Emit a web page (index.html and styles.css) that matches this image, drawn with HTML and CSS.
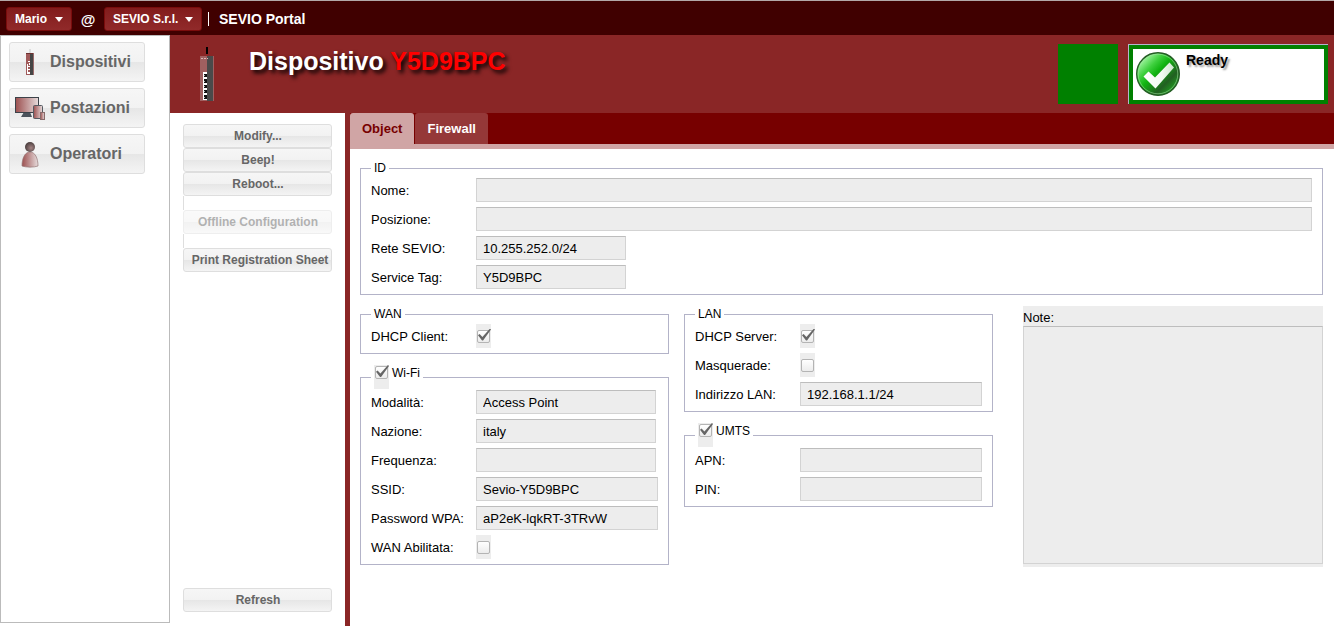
FILE: index.html
```html
<!DOCTYPE html>
<html lang="it">
<head>
<meta charset="utf-8">
<title>SEVIO Portal</title>
<link rel="stylesheet" href="styles.css">
</head>
<body>
<header class="topbar">
  <button class="menu-btn menu-user" type="button" aria-haspopup="true">Mario<span class="caret"></span></button>
  <span class="at">@</span>
  <button class="menu-btn" type="button" aria-haspopup="true">SEVIO S.r.l.<span class="caret"></span></button>
  <span class="divider"></span>
  <span class="brand">SEVIO Portal</span>
</header>
<div class="shell">
  <nav class="sidebar">
    <button class="btn nav-btn" type="button">
      <svg class="nav-icon" viewBox="0 0 32 32" aria-hidden="true">
        <defs><linearGradient id="rose" x1="0" y1="0" x2="1" y2="0"><stop offset="0" stop-color="#9c4f4f"/><stop offset="1" stop-color="#e6dcdc"/></linearGradient></defs>
        <path d="M15 2h2v4h-2z" fill="#ddd"/>
        <path d="M12 6h4v22h-4z" fill="#a05a5a"/>
        <path d="M16 6h3v22h-3z" fill="#454545"/>
        <path d="M19 6h1v22h-1z" fill="#9a6a6a"/>
        <path d="M12 6h7v1h-7z" fill="#6b3030"/>
        <path d="M14 14h2v1h-2zM13 17h1v10h-1zM15 16h1v2h-1zM14 19h2v1h-2zM14 22h2v1h-2zM14 25h2v1h-2zM13 26h3v1h-3z" fill="#fff"/>
      </svg>
      <span>Dispositivi</span>
    </button>
    <button class="btn nav-btn" type="button">
      <svg class="nav-icon" viewBox="0 0 32 32" aria-hidden="true">
        <path d="M10 19h6l2 5H7z" fill="#4b525b"/>
        <rect x="1.500" y="4.500" width="23" height="15" fill="url(#rose)" stroke="#3c4249"/>
        <rect x="19.500" y="12.500" width="9" height="13" rx="1" fill="url(#rose)" stroke="#555b62"/>
        <rect x="26.500" y="19.500" width="4" height="7" fill="url(#rose)" stroke="#886a6a"/>
      </svg>
      <span>Postazioni</span>
    </button>
    <button class="btn nav-btn" type="button">
      <svg class="nav-icon" viewBox="0 0 32 32" aria-hidden="true">
        <defs><radialGradient id="head" cx=".6" cy=".6" r=".6"><stop offset="0" stop-color="#a58484"/><stop offset="1" stop-color="#4c4040"/></radialGradient></defs>
        <path d="M8 27c0-8 3-14 8-14s8 6 8 14c-4 1.500-12 1.500-16 0z" fill="url(#rose)" stroke="#957575" stroke-width=".7"/>
        <circle cx="16" cy="8" r="5" fill="url(#head)"/>
      </svg>
      <span>Operatori</span>
    </button>
  </nav>
  <main class="main">
    <div class="title-bar">
      <svg class="device" viewBox="0 0 14 56" aria-hidden="true">
        <path d="M6 1h2v7H6z" fill="#000"/>
        <path d="M0 10h7v45H0z" fill="#a06060"/>
        <path d="M7 10h6v45H7z" fill="#4a4a4a"/>
        <path d="M13 10h1v45h-1z" fill="#a06060"/>
        <path d="M1 12.500h7" stroke="#d8b4b4" stroke-dasharray="2 1"/>
        <path d="M3 26h4v28H3z" fill="#fff"/>
        <path d="M4 28h3v3H4zM4 33h3v4H4zM4 39h3v3H4zM4 44h3v3H4zM4 49h3v4H4z" fill="#111"/>
        <path d="M4 29h1v1H4zM4 35h1v1H4zM4 40h1v1H4zM4 45h1v1H4zM4 51h1v1H4z" fill="#aaa"/>
      </svg>
      <h1 class="title">Dispositivo <span class="device-id">Y5D9BPC</span></h1>
      <div class="led"></div>
      <div class="status-frame">
        <div class="status">
          <svg class="status-icon" viewBox="0 0 44 44" aria-hidden="true">
            <defs>
              <linearGradient id="ball" x1=".1" y1=".1" x2=".9" y2=".9"><stop offset="0" stop-color="#b8ffb8"/><stop offset=".28" stop-color="#3fd03f"/><stop offset=".45" stop-color="#10b410"/><stop offset=".75" stop-color="#225f22"/><stop offset="1" stop-color="#20a820"/></linearGradient>
              <linearGradient id="tick" x1="0" y1="0" x2="1" y2="0"><stop offset="0" stop-color="#fff"/><stop offset=".6" stop-color="#f2faf2"/><stop offset="1" stop-color="#cfe5cf"/></linearGradient>
            </defs>
            <circle cx="22" cy="22" r="21.300" fill="url(#ball)" stroke="#245c24" stroke-width="1.400"/>
            <circle cx="22" cy="22" r="19.800" fill="none" stroke="#9fdf9f" stroke-width=".8" opacity=".7"/>
            <path d="M7.500 24.500l5-5 6.500 6L33.500 10.500l4.500 5L19.500 36.500z" fill="url(#tick)"/>
          </svg>
          <span class="status-text">Ready</span>
        </div>
      </div>
    </div>
    <div class="work">
      <aside class="actions">
        <button class="btn action" type="button">Modify...</button>
        <button class="btn action" type="button">Beep!</button>
        <button class="btn action" type="button">Reboot...</button>
        <div class="spacer"></div>
        <button class="btn action" type="button" disabled>Offline Configuration</button>
        <div class="spacer"></div>
        <button class="btn action" type="button">Print Registration Sheet</button>
        <button class="btn action refresh" type="button">Refresh</button>
      </aside>
      <section class="panel">
        <div class="tabs" role="tablist">
          <button class="tab tab-active" type="button" role="tab" aria-selected="true">Object</button>
          <button class="tab" type="button" role="tab" aria-selected="false">Firewall</button>
        </div>
        <form class="form">
          <fieldset class="group">
            <legend class="legend">ID</legend>
            <div class="row"><label for="nome">Nome:</label><input class="field field-wide" id="nome" type="text" readonly></div>
            <div class="row"><label for="pos">Posizione:</label><input class="field field-wide" id="pos" type="text" readonly></div>
            <div class="row"><label for="rete">Rete SEVIO:</label><input class="field field-short" id="rete" type="text" value="10.255.252.0/24" readonly></div>
            <div class="row"><label for="tag">Service Tag:</label><input class="field field-short" id="tag" type="text" value="Y5D9BPC" readonly></div>
          </fieldset>
          <div class="columns">
            <div class="stack">
              <fieldset class="group">
                <legend class="legend">WAN</legend>
                <div class="row"><label for="dhcpc">DHCP Client:</label><span class="check"><input id="dhcpc" type="checkbox" checked></span></div>
              </fieldset>
              <fieldset class="group group-check">
                <legend class="legend legend-check"><span class="check"><input id="wifi" type="checkbox" checked></span><label for="wifi">Wi-Fi</label></legend>
                <div class="row"><label for="mod">Modalità:</label><input class="field field-combo" id="mod" type="text" value="Access Point" readonly></div>
                <div class="row"><label for="naz">Nazione:</label><input class="field field-combo" id="naz" type="text" value="italy" readonly></div>
                <div class="row"><label for="freq">Frequenza:</label><input class="field field-combo" id="freq" type="text" readonly></div>
                <div class="row"><label for="ssid">SSID:</label><input class="field" id="ssid" type="text" value="Sevio-Y5D9BPC" readonly></div>
                <div class="row"><label for="wpa">Password WPA:</label><input class="field" id="wpa" type="text" value="aP2eK-lqkRT-3TRvW" readonly></div>
                <div class="row"><label for="wanab">WAN Abilitata:</label><span class="check"><input id="wanab" type="checkbox"></span></div>
              </fieldset>
            </div>
            <div class="stack">
              <fieldset class="group">
                <legend class="legend">LAN</legend>
                <div class="row"><label for="dhcps">DHCP Server:</label><span class="check"><input id="dhcps" type="checkbox" checked></span></div>
                <div class="row"><label for="masq">Masquerade:</label><span class="check"><input id="masq" type="checkbox"></span></div>
                <div class="row"><label for="lan">Indirizzo LAN:</label><input class="field" id="lan" type="text" value="192.168.1.1/24" readonly></div>
              </fieldset>
              <fieldset class="group group-check">
                <legend class="legend legend-check"><span class="check"><input id="umts" type="checkbox" checked></span><label for="umts">UMTS</label></legend>
                <div class="row"><label for="apn">APN:</label><input class="field" id="apn" type="text" readonly></div>
                <div class="row"><label for="pin">PIN:</label><input class="field" id="pin" type="text" readonly></div>
              </fieldset>
            </div>
            <div class="note">
              <label for="note">Note:</label>
              <textarea id="note" class="note-area" readonly></textarea>
            </div>
          </div>
        </form>
      </section>
    </div>
  </main>
</div>
</body>
</html>
```
FILE: styles.css
```css
* { box-sizing: border-box; }

body {
  margin: 0;
  min-height: 100vh;
  display: flex;
  flex-direction: column;
  background: #fff;
  color: #000;
  font: 13px "Liberation Sans", Arial, sans-serif;
}

button, input, textarea { font: inherit; }

/* Top bar */
.topbar {
  display: flex;
  align-items: center;
  height: 35px;
  padding: 2px 6px 0;
  border-top: 1px solid #b4a8a8;
  background: #400000;
  color: #fff;
  font-weight: bold;
}
.menu-btn {
  display: flex;
  align-items: center;
  justify-content: space-between;
  gap: 6px;
  width: 98px;
  height: 24px;
  padding: 0 8px;
  border: 1px solid #7a0c0c;
  border-radius: 3px;
  background: linear-gradient(#821c1c, #912a2a);
  color: #fff;
  font-size: 12px;
  font-weight: bold;
  white-space: nowrap;
}
.menu-user { width: 66px; }
.caret {
  border: 4px solid transparent;
  border-top: 5px solid #fff;
  border-bottom: 0;
}
.at { width: 32px; text-align: center; font-size: 15px; }
.divider { width: 1px; height: 14px; margin: 0 10px 0 6px; background: #fff; }
.brand { font-size: 14px; }

/* Shared push button */
.btn {
  border: 1px solid #dedede;
  border-radius: 3px;
  background: linear-gradient(#f6f6f6, #f2f2f2 50%, #e6e6e6 50%, #f4f4f4);
  color: #666;
  font-weight: bold;
  white-space: nowrap;
}

.shell { flex: 1; display: flex; }

.sidebar {
  display: flex;
  flex-direction: column;
  gap: 6px;
  width: 170px;
  margin-bottom: 3px;
  padding: 6px 24px 6px 8px;
  border: 1px solid #bbb;
}
.nav-btn {
  display: flex;
  align-items: center;
  gap: 4px;
  height: 40px;
  padding: 0 4px;
  font-size: 16px;
}
.nav-icon { width: 32px; height: 32px; margin-top: 2px; }

.main { flex: 1; display: flex; flex-direction: column; min-width: 0; }

/* Title bar */
.title-bar {
  display: flex;
  height: 78px;
  padding: 9px 6px 9px 30px;
  background: #8a2626;
}
.device { width: 14px; height: 56px; margin-top: 2px; }
.title {
  flex: 1;
  margin: 2px 0 0 35px;
  color: #fff;
  font-size: 25px;
  line-height: 30px;
  text-shadow: 3px 3px 4px #000;
}
.device-id { color: #f00; }
.led { width: 60px; background: #008000; }
.status-frame {
  width: 200px;
  margin-left: 10px;
  border: solid #b5b5cc;
  border-width: 1px 0 0 1px;
}
.status {
  display: flex;
  gap: 6px;
  height: 100%;
  padding: 3px;
  border: 4px solid #008000;
  background: #fff;
}
.status-icon { width: 44px; height: 44px; }
.status-text {
  font-size: 14px;
  font-weight: bold;
  line-height: 16px;
  text-shadow: 2px 2px 2px #999;
}

.work { flex: 1; display: flex; }

/* Action column */
.actions {
  display: flex;
  flex-direction: column;
  width: 175px;
  padding: 11px 13px 14px;
}
.action { height: 24px; padding: 0 0 1px 1px; font-size: 12px; }
.action:nth-of-type(5) { padding-left: 5px; }
.action:disabled { opacity: .5; }
.spacer { height: 14px; border-left: 1px solid #dedede; }
.refresh { margin-top: auto; }

/* Tabbed panel */
.panel { flex: 1; min-width: 0; border-left: 5px solid #8a2626; }
.tabs {
  display: flex;
  gap: 1px;
  height: 36px;
  border-bottom: 5px solid #d0a5a5;
  background: #770000;
}
.tab {
  padding: 0 12px;
  border: 0;
  border-radius: 3px 3px 0 0;
  background: #953838;
  color: #fff;
  font-weight: bold;
}
.tab-active { background: #d0a5a5; color: #700; }

/* Form */
.form {
  display: flex;
  flex-direction: column;
  gap: 11px;
  padding: 11px 11px 11px 10px;
}
.group {
  min-width: 0;
  margin: 0;
  padding: 2px 10px 5px;
  border: 1px solid #b3b3c8;
}
.group-check { padding-top: 1px; }
.legend { padding: 0 3px; font-size: 12px; line-height: 16px; }
.legend-check { display: flex; gap: 3px; }
.legend-check .check { align-items: flex-start; padding-top: 1px; }
.row {
  display: grid;
  grid-template-columns: 105px minmax(0, 1fr);
  align-items: center;
  height: 24px;
}
.row + .row { margin-top: 5px; }
.field {
  width: 100%;
  max-width: 182px;
  height: 24px;
  padding: 0 6px;
  border: 1px solid #d3d3d3;
  border-top-color: #bdbdbd;
  border-radius: 0;
  background: #ededed;
  color: #000;
}
.field-wide { max-width: none; }
.field-short { max-width: 150px; }
.field-combo { max-width: 180px; }

.check {
  display: flex;
  align-items: center;
  justify-content: center;
  width: 15px;
  height: 24px;
  background: #ededed;
}
.check input {
  appearance: none;
  position: relative;
  width: 13px;
  height: 13px;
  margin: 0;
  border: 1px solid #b4b4b4;
  border-radius: 2px;
  background: linear-gradient(#fff, #ececec);
}
.check input:checked::before {
  content: "";
  position: absolute;
  inset: -2px -2px 1px 0;
  background: #666;
  clip-path: polygon(0 56%, 12% 46%, 34% 70%, 92% 0, 100% 8%, 39% 100%, 31% 100%);
}

.columns {
  display: grid;
  grid-template-columns: 309fr 309fr 315fr;
  gap: 15px;
  align-items: start;
}
.stack { display: flex; flex-direction: column; gap: 11px; min-width: 0; }
.note {
  display: flex;
  flex-direction: column;
  margin-left: 15px;
  padding: 4px 0 3px;
  background: #ededed;
}
.note label { line-height: 16px; }
.note-area {
  height: 238px;
  border: 1px solid #d3d3d3;
  border-top-color: #bdbdbd;
  border-radius: 0;
  background: #ededed;
  resize: none;
}
```
